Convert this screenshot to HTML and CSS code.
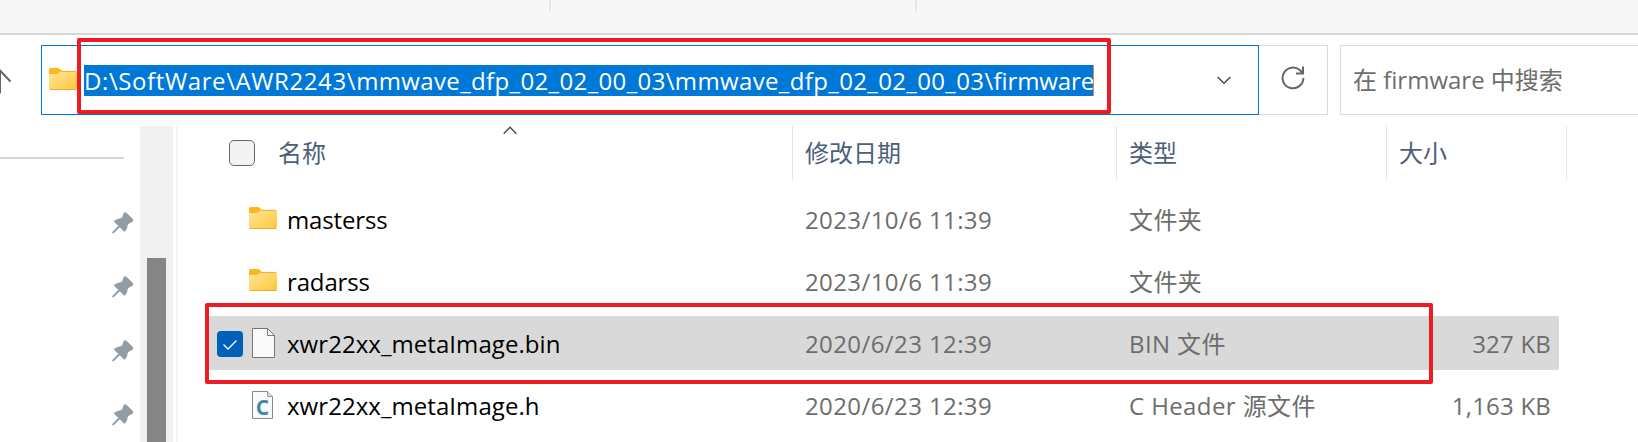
FILE: index.html
```html
<!DOCTYPE html>
<html lang="zh-CN">
<head>
<meta charset="utf-8">
<title>firmware</title>
<link rel="stylesheet" href="styles.css">
</head>
<body>
<svg class="defs" width="0" height="0">
  <defs>
    <linearGradient id="fold" x1="0" y1="0" x2="1" y2="1"><stop offset="0" stop-color="#ffe69e"/><stop offset="1" stop-color="#ffc736"/></linearGradient>
    <symbol id="folder" viewBox="0 0 28 22">
      <path d="M0 1.500Q0 0 1.500 0H9Q10.500 0 11.500 1.500L13 3V6H0Z" fill="#fcb91c"/>
      <path d="M0 6H7Q9 6 10.500 4.500L12 3H26.500Q28 3 28 4.500V20.500Q28 22 26.500 22H1.500Q0 22 0 20.500Z" fill="url(#fold)"/>
      <path d="M12 3.400H27M1 21.500H27" stroke="#eead2b" fill="none"/>
    </symbol>
    <symbol id="pin" viewBox="0 0 22 22">
      <path d="M13 .3Q14 .3 15 1.200L20.600 6.700Q22 8.300 20.700 9.500L16 12.300Q15.500 16 13.500 19Q12.500 20 11.500 19L7.800 15.300L2 21Q.5 21.800 .3 21Q-.1 20.300 1 19.300L6.300 13.800L2.500 10.300Q1.500 9.200 3 8.200Q6 6.200 9.800 6L11.500 1.500Q12 .3 13 .3Z" fill="#939da4"/>
    </symbol>
  </defs>
</svg>
<div class="window">
  <div class="ribbon"><i></i><i></i></div>
  <div class="nav">
    <svg class="up" width="12" height="25" viewBox="0 0 12 25"><path d="M0 1.500V24.500M-10 12L0 1.500L10.500 12.500" fill="none" stroke="#666" stroke-width="2"/></svg>
    <div class="address">
      <svg class="folder" width="28" height="22"><use href="#folder"/></svg>
      <span class="path"><span class="root">D:\SoftWare\AWR2243\</span>mmwave_dfp_02_02_00_03\mmwave_dfp_02_02_00_03\<span class="leaf">firmware</span></span>
      <svg class="chev" width="14" height="9" viewBox="0 0 14 9"><path d="M.7 1L7 7.300L13.300 1" fill="none" stroke="#444" stroke-width="1.300"/></svg>
      <div class="mark mark-path"></div>
    </div>
    <div class="refresh"><svg width="24" height="24" viewBox="0 0 24 24"><path d="M22.400 12A10.400 10.400 0 1 1 19 4.200L22 7.300M22 .5V7.500H15" fill="none" stroke="#666" stroke-width="2"/></svg></div>
    <div class="search"><span>在 firmware 中搜索</span></div>
  </div>
  <div class="main">
    <div class="side">
      <hr>
      <svg class="pin" width="22" height="22"><use href="#pin"/></svg>
      <svg class="pin" width="22" height="22"><use href="#pin"/></svg>
      <svg class="pin" width="22" height="22"><use href="#pin"/></svg>
      <svg class="pin" width="22" height="22"><use href="#pin"/></svg>
    </div>
    <div class="track"><div class="thumb"></div></div>
    <div class="files">
      <div class="row head">
        <div class="c-name"><span class="box"></span><span>名称</span>
          <svg class="sort" width="14" height="9" viewBox="0 0 14 9"><path d="M.7 7.700L7 1.200L13.300 7.700" fill="none" stroke="#444" stroke-width="1.300"/></svg></div>
        <div class="c-date">修改日期</div><div class="c-type">类型</div><div class="c-size">大小</div>
      </div>
      <div class="row">
        <div class="c-name"><span class="slot"></span><span class="icon"><svg class="fi" width="28" height="22"><use href="#folder"/></svg></span><span class="label dir">masterss</span></div>
        <div class="c-date">2023/10/6 11:39</div><div class="c-type">文件夹</div><div class="c-size"></div>
      </div>
      <div class="row">
        <div class="c-name"><span class="slot"></span><span class="icon"><svg class="fi" width="28" height="22"><use href="#folder"/></svg></span><span class="label dir">radarss</span></div>
        <div class="c-date">2023/10/6 11:39</div><div class="c-type">文件夹</div><div class="c-size"></div>
      </div>
      <div class="row selected">
        <div class="c-name"><span class="slot"><svg width="26" height="26" viewBox="0 0 26 26"><rect width="26" height="26" rx="4" fill="#005fb8"/><path d="M6.500 13.500L11 18L19.500 9.500" fill="none" stroke="#fff" stroke-width="1.300"/></svg></span><span class="icon"><svg width="23" height="30" viewBox="0 0 23 30"><path d="M.5 .5H15.500L22.500 7.500V29.500H.5Z" fill="#fafafa" stroke="#777"/><path d="M15.500 .5V7.500H22.500" fill="none" stroke="#777"/></svg></span><span class="label">xwr22xx_metaImage.bin</span></div>
        <div class="c-date">2020/6/23 12:39</div><div class="c-type">BIN 文件</div><div class="c-size">327 KB</div>
        <div class="mark mark-row"></div>
      </div>
      <div class="row">
        <div class="c-name"><span class="slot"></span><span class="icon"><span class="cfile"><svg width="21" height="28" viewBox="0 0 21 28"><path d="M.5 .5H15.500L20.500 5.500V27.500H.5Z" fill="#fafafa" stroke="#888"/><path d="M15.500 .5V5.500H20.500" fill="#ddd" stroke="#999"/></svg><b>C</b></span></span><span class="label">xwr22xx_metaImage.h</span></div>
        <div class="c-date">2020/6/23 12:39</div><div class="c-type">C Header 源文件</div><div class="c-size">1,163 KB</div>
      </div>
    </div>
  </div>
</div>
</body>
</html>
```
FILE: styles.css
```css
* { box-sizing: border-box; }
body { margin: 0; background: #fff; font: 24px/32px "Open Sans", "Noto Sans CJK SC", sans-serif; color: #6d6d6d; white-space: nowrap; }
.defs { position: absolute; }
.window { width: 1638px; height: 442px; overflow: hidden; }
.ribbon { display: flex; height: 35px; padding-left: 549px; gap: 364px; background: #f7f7f7; border-bottom: 2px solid #d6d6d6; }
.ribbon i { width: 2px; height: 11px; background: #e6e6e6; }
.nav { display: flex; height: 91px; padding-top: 10px; }
.up { margin: 24px 29px 0 0; }
.address { position: relative; display: flex; width: 1218px; height: 70px; border: 1px solid #0078d4; padding-left: 7px; }
.address .folder { margin-top: 22px; }
.path { margin: 19px 0 0 7px; width: 1010px; height: 31px; background: #0078d7; color: #fff; border-right: 1px solid #e08a3c; line-height: 31px; letter-spacing: .36px; }
.root { letter-spacing: .6px; }
.leaf { letter-spacing: -.1px; }
.chev { margin: 30px 0 0 123px; }
.refresh { width: 69px; height: 70px; border: 1px solid #d9d9d9; border-left: 0; padding: 19px 0 0 22px; }
.search { flex: 1; margin-left: 12px; height: 70px; border: 1px solid #d9d9d9; border-right: 0; padding: 18px 0 0 12px; }
.main { display: flex; height: 316px; }
.side { width: 140px; padding-top: 31px; }
.side hr { margin: 0 0 53px; width: 124px; height: 2px; border: 0; background: #d6d6d6; }
.pin { display: block; margin: 0 0 42px 112px; }
.track { width: 33px; background: #f0f0f0; padding: 132px 7px 0; }
.thumb { height: 184px; background: #858585; }
.files { flex: 1; margin-left: 3px; border-left: 2px solid #f5f5f5; padding-left: 31px; }
.row { position: relative; display: flex; width: 1350px; height: 54px; margin-bottom: 8px; line-height: 56px; border-radius: 2px; }
.head { width: 1358px; margin-bottom: 12px; line-height: 53px; color: #4c607a; }
.c-name { position: relative; display: flex; width: 583px; color: #000; }
.head .c-name, .head .c-date, .head .c-type, .head .c-size { border-right: 1px solid #e5e5e5; letter-spacing: 0; }
.head .c-name { width: 584px; color: #4c607a; }
.label { letter-spacing: .06px; }
.dir { letter-spacing: -.15px; }
.c-date { width: 324px; padding-left: 13px; letter-spacing: .4px; }
.head .c-date { padding-left: 12px; }
.c-type { width: 270px; padding-left: 13px; letter-spacing: .4px; }
.head .c-type { padding-left: 12px; }
.c-size { flex: 1; text-align: right; padding-right: 8px; letter-spacing: .2px; }
.head .c-size { text-align: left; padding-left: 12px; }
.box { width: 26px; height: 26px; margin: 14px 23px 0 20px; border: 1px solid #666; border-radius: 5px; background: #f3f3f3; }
.sort { position: absolute; left: 294px; top: 0; }
.slot { width: 26px; height: 26px; margin: 15px 9px 0 8px; display: flex; }
.icon { width: 35px; height: 54px; display: flex; padding-top: 12px; }
.fi { margin: 3px 0 0 -3px; flex: none; }
.cfile { display: grid; width: 21px; height: 28px; margin-top: 1px; }
.cfile > * { grid-area: 1 / 1; }
.cfile b { justify-self: center; padding-top: 3px; font-size: 21px; line-height: 26px; color: #4488a2; }
.selected { background: #d9d9d9; }
.mark { position: absolute; border: 4px solid #ed1c24; border-radius: 2px; }
.mark-path { left: 35px; top: -8px; width: 1034px; height: 76px; }
.mark-row { left: -4px; top: -13px; width: 1228px; height: 81px; }
```
